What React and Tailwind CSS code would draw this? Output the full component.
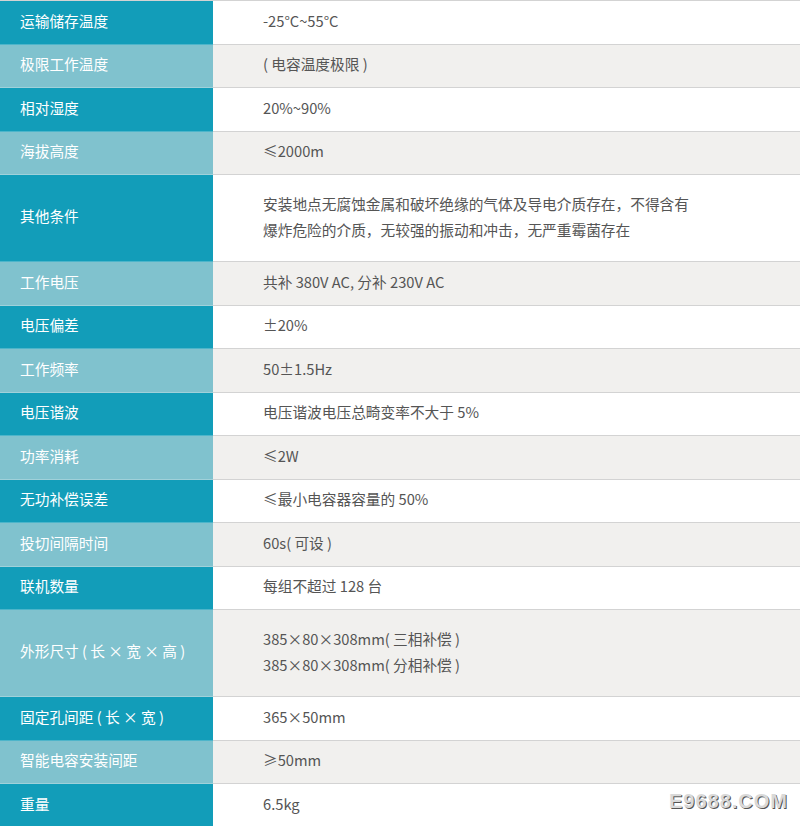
const rows = [
  { label: '运输储存温度', value: ['-25°C~55°C'] },
  { label: '极限工作温度', value: ['( 电容温度极限 )'] },
  { label: '相对湿度', value: ['20%~90%'] },
  { label: '海拔高度', value: ['≤2000m'] },
  {
    label: '其他条件',
    value: ['安装地点无腐蚀金属和破坏绝缘的气体及导电介质存在，不得含有', '爆炸危险的介质，无较强的振动和冲击，无严重霉菌存在'],
    tall: true,
  },
  { label: '工作电压', value: ['共补 380V AC, 分补 230V AC'] },
  { label: '电压偏差', value: ['±20%'] },
  { label: '工作频率', value: ['50±1.5Hz'] },
  { label: '电压谐波', value: ['电压谐波电压总畸变率不大于 5%'] },
  { label: '功率消耗', value: ['≤2W'] },
  { label: '无功补偿误差', value: ['≤最小电容器容量的 50%'] },
  { label: '投切间隔时间', value: ['60s( 可设 )'] },
  { label: '联机数量', value: ['每组不超过 128 台'] },
  {
    label: '外形尺寸 ( 长 × 宽 × 高 )',
    value: ['385×80×308mm( 三相补偿 )', '385×80×308mm( 分相补偿 )'],
    tall: true,
  },
  { label: '固定孔间距 ( 长 × 宽 )', value: ['365×50mm'] },
  { label: '智能电容安装间距', value: ['≥50mm'] },
  { label: '重量', value: ['6.5kg'] },
];

const SpecRow = ({ row, index }) => {
  const odd = index % 2 === 1;
  return (
    <div className={`flex ${row.tall ? 'h-[87px]' : 'h-[43.5px]'}`}>
      <div
        className={`flex w-[213px] shrink-0 items-center border-b border-white/25 pb-[3px] pl-5 text-[14.7px] text-white ${odd ? 'bg-[#80c2ce]' : 'bg-[#129db9]'}`}
      >
        {row.label}
      </div>
      <div
        className={`flex flex-1 flex-col justify-center border-b border-[#d3d3d3] pb-[3px] pl-[50px] text-[14.7px] leading-[26px] text-[#555] ${odd ? 'bg-[#f1f0ee]' : 'bg-white'}`}
      >
        {row.value.map((line) => (
          <p key={line}>{line}</p>
        ))}
      </div>
    </div>
  );
};

export default function App() {
  return (
    <div className="relative h-[826px] w-[800px] overflow-hidden bg-white font-['Noto_Sans_CJK_SC','Noto_Sans',sans-serif]">
      <div className="border-t border-[#d3d3d3]">
        {rows.map((row, i) => (
          <SpecRow key={row.label} row={row} index={i} />
        ))}
      </div>
      <span className="absolute bottom-[10px] right-[12px] font-['Liberation_Sans',sans-serif] text-[20px] font-bold tracking-[1px] text-[#d9d9d9] [text-shadow:1px_1px_0_#555,-1px_-1px_0_#fff]">
        E9688.COM
      </span>
    </div>
  );
}
